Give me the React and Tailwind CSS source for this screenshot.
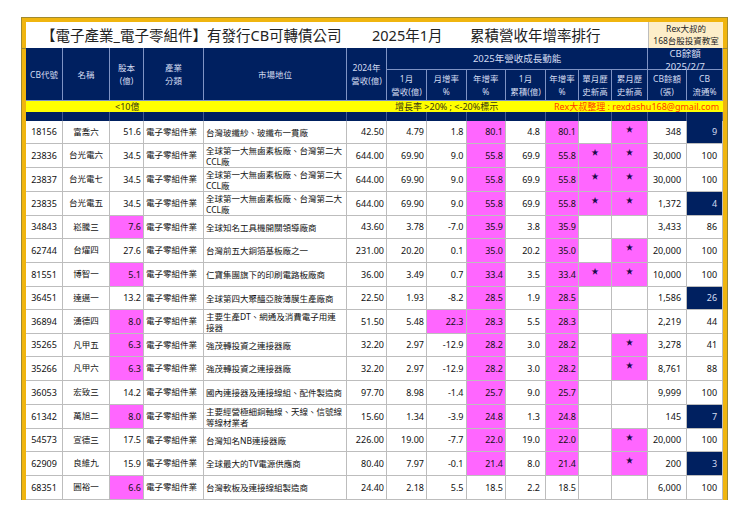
const rows = [
  ['18156', '富喬六', '51.6', '台灣玻纖紗、玻纖布一貫廠', '42.50', '4.79', '1.8', '80.1', '4.8', '80.1', false, true, '348', '9'],
  ['23836', '台光電六', '34.5', '全球第一大無鹵素板廠、台灣第二大CCL廠', '644.00', '69.90', '9.0', '55.8', '69.9', '55.8', true, true, '30,000', '100'],
  ['23837', '台光電七', '34.5', '全球第一大無鹵素板廠、台灣第二大CCL廠', '644.00', '69.90', '9.0', '55.8', '69.9', '55.8', true, true, '30,000', '100'],
  ['23835', '台光電五', '34.5', '全球第一大無鹵素板廠、台灣第二大CCL廠', '644.00', '69.90', '9.0', '55.8', '69.9', '55.8', true, true, '1,372', '4'],
  ['34843', '崧騰三', '7.6', '全球知名工具機開關領導廠商', '43.60', '3.78', '-7.0', '35.9', '3.8', '35.9', false, false, '3,433', '86'],
  ['62744', '台燿四', '27.6', '台灣前五大銅箔基板廠之一', '231.00', '20.20', '0.1', '35.0', '20.2', '35.0', false, true, '20,000', '100'],
  ['81551', '博智一', '5.1', '仁寶集團旗下的印刷電路板廠商', '36.00', '3.49', '0.7', '33.4', '3.5', '33.4', true, true, '10,000', '100'],
  ['36451', '達邁一', '13.2', '全球第四大聚醯亞胺薄膜生產廠商', '22.50', '1.93', '-8.2', '28.5', '1.9', '28.5', false, false, '1,586', '26'],
  ['36894', '湧德四', '8.0', '主要生產DT、網通及消費電子用連接器', '51.50', '5.48', '22.3', '28.3', '5.5', '28.3', false, false, '2,219', '44'],
  ['35265', '凡甲五', '6.3', '強茂轉投資之連接器廠', '32.20', '2.97', '-12.9', '28.2', '3.0', '28.2', false, true, '3,278', '41'],
  ['35266', '凡甲六', '6.3', '強茂轉投資之連接器廠', '32.20', '2.97', '-12.9', '28.2', '3.0', '28.2', false, true, '8,761', '88'],
  ['36053', '宏致三', '14.2', '國內連接器及連接線組、配件製造商', '97.70', '8.98', '-1.4', '25.7', '9.0', '25.7', false, false, '9,999', '100'],
  ['61342', '萬旭二', '8.0', '主要經營極細銅軸線、天線、信號線等線材業者', '15.60', '1.34', '-3.9', '24.8', '1.3', '24.8', false, false, '145', '7'],
  ['54573', '宣德三', '17.5', '台灣知名NB連接器廠', '226.00', '19.00', '-7.7', '22.0', '19.0', '22.0', false, true, '20,000', '100'],
  ['62909', '良維九', '15.9', '全球最大的TV電源供應商', '80.40', '7.97', '-0.1', '21.4', '8.0', '21.4', false, true, '200', '3'],
  ['68351', '圓裕一', '6.6', '台灣軟板及連接線組製造商', '24.40', '2.18', '5.5', '18.5', '2.2', '18.5', false, false, '6,000', '100'],
];

const shortRows = [0, 4, 7, 9, 13];

const th = 'bg-[#002060] text-[#d5ddf2] font-normal text-[8.5px] leading-[13px] p-0 text-center border-r border-b border-[#7f93c4]';
const td = 'p-0 text-[#111] border-r border-b border-[#bdbdbd]';
const num = 'text-[9px] text-right pr-[2px]';
const pink = 'bg-[#ff66ff] border-[#b85cb8]';
const navySpacer = 'bg-[#002060] p-0 border-r border-[#40598f]';

function Star({ on }) {
  return (
    <td className={`${td} text-center text-[7.5px] leading-none ${on ? pink : ''}`}>
      {on && <span className="block pb-[5px] text-[#1a0a4a]">★</span>}
    </td>
  );
}

function Row({ r, short }) {
  const lowCap = parseFloat(r[2]) < 10;
  const hotMonth = parseFloat(r[6]) > 20;
  const hotYear = parseFloat(r[7]) > 20;
  const lowFloat = parseInt(r[13]) < 30;
  return (
    <tr className={short ? 'h-[23px]' : 'h-[24px]'}>
      <td className={`${td} text-[9px] text-center`}>{r[0]}</td>
      <td className={`${td} text-[8.5px] text-center`}>{r[1]}</td>
      <td className={`${td} ${num} ${lowCap ? pink : ''}`}>{r[2]}</td>
      <td className={`${td} text-[8.5px] pl-[2px] whitespace-nowrap`}>電子零組件業</td>
      <td className={`${td} text-[8.5px] leading-[11px] pl-[2px] pr-[3px]`}>{r[3]}</td>
      <td className={`${td} ${num}`}>{r[4]}</td>
      <td className={`${td} ${num}`}>{r[5]}</td>
      <td className={`${td} ${num} ${hotMonth ? pink : ''}`}>{r[6]}</td>
      <td className={`${td} ${num} ${hotYear ? pink : ''}`}>{r[7]}</td>
      <td className={`${td} text-[9px] text-right pr-[5px]`}>{r[8]}</td>
      <td className={`${td} ${num} ${hotYear ? pink : ''}`}>{r[9]}</td>
      <Star on={r[10]} />
      <Star on={r[11]} />
      <td className={`${td} text-[9px] text-right pr-[5px]`}>{r[12]}</td>
      <td className={`${td} text-[9px] text-right pr-[5px] ${lowFloat ? 'bg-[#002060] text-[#d5ddf2]' : ''}`}>{r[13]}</td>
    </tr>
  );
}

export default function App() {
  return (
    <div className="h-[523px] w-[740px] overflow-hidden bg-white pt-[17px] pl-[21px] font-['Noto_Sans','Noto_Sans_CJK_TC',sans-serif]">
      <div className="relative w-[707px] border-x border-t border-[#a08a30]">
        {/* darker tick across the gold frame where the header starts */}
        <span className="absolute left-0 top-[30px] h-px w-[4px] bg-[#a08a30]" />
        <span className="absolute right-0 top-[30px] h-px w-[4px] bg-[#a08a30]" />
        <div className="border-x-4 border-t-4 border-[#f0b50f]">
          <table className="w-[697px] table-fixed border-separate border-spacing-0">
            <colgroup>
              <col className="w-[37px]" />
              <col className="w-[47px]" />
              <col className="w-[34px]" />
              <col className="w-[60px]" />
              <col className="w-[143px]" />
              <col className="w-[40px]" />
              <col className="w-[40px]" />
              <col className="w-[39.5px]" />
              <col className="w-[39.5px]" />
              <col className="w-[40px]" />
              <col className="w-[33px]" />
              <col className="w-[33px]" />
              <col className="w-[36px]" />
              <col className="w-[39px]" />
              <col className="w-[36px]" />
            </colgroup>
            <thead>
              <tr className="h-[26px]">
                <td colSpan={13} className="p-0 bg-white text-[#222] text-[14.5px] leading-none whitespace-nowrap">
                  <div className="flex items-center pl-[15px]">
                    <span className="w-[166px]">【電子產業_電子零組件】</span>
                    <span className="w-[165px]">有發行CB可轉債公司</span>
                    <span className="w-[98px]">2025年1月</span>
                    <span>累積營收年增率排行</span>
                  </div>
                </td>
                <td colSpan={2} className="p-0 bg-[#fdeec9] text-[#222] text-[8.5px] leading-[12px] text-center border-l border-[#bdbdbd]">
                  Rex大叔的<br />168台股投資教室
                </td>
              </tr>
              <tr className="h-[22px]">
                <th rowSpan={2} className={th}>CB代號</th>
                <th rowSpan={2} className={th}>名稱</th>
                <th rowSpan={2} className={th}>股本<br />(億)</th>
                <th rowSpan={2} className={th}>產業<br />分類</th>
                <th rowSpan={2} className={th}>市場地位</th>
                <th rowSpan={2} className={th}>2024年<br />營收(億)</th>
                <th colSpan={7} className={`${th} text-[9.5px]`}>2025年營收成長動能</th>
                <th colSpan={2} className={th}>
                  <div className="flex h-[21px] translate-y-[1px] flex-col justify-center text-[9.5px]">
                    <span>CB餘額</span>
                    <span>2025/2/7</span>
                  </div>
                </th>
              </tr>
              <tr className="h-[31px]">
                <th className={th}>1月<br />營收(億)</th>
                <th className={th}>月增率<br />%</th>
                <th className={th}>年增率<br />%</th>
                <th className={th}>1月<br />累積(億)</th>
                <th className={th}>年增率<br />%</th>
                <th className={th}>單月歷<br />史新高</th>
                <th className={th}>累月歷<br />史新高</th>
                <th className={th}>CB餘額<br />(張)</th>
                <th className={th}>CB<br />流通%</th>
              </tr>
              <tr className="h-[11px] bg-[#ffff00] text-[9px] leading-none whitespace-nowrap">
                <td colSpan={2} className="p-0" />
                <td colSpan={2} className="p-0 text-[#3a3a10] pl-[5px]">&lt;10億</td>
                <td colSpan={2} className="p-0" />
                <td colSpan={4} className="p-0 text-[#3a3a10] pl-[8px]">增長率 &gt;20% ; &lt;-20%標示</td>
                <td colSpan={5} className="p-0 text-[#ff3b00] pl-[8px]">Rex大叔整理 : rexdashu168@gmail.com</td>
              </tr>
              <tr className="h-[9px]">
                {Array.from({ length: 15 }).map((_, i) => (
                  <td key={i} className={navySpacer} />
                ))}
              </tr>
            </thead>
            <tbody>
              {rows.map((r, i) => (
                <Row key={r[0]} r={r} short={shortRows.includes(i)} />
              ))}
            </tbody>
          </table>
        </div>
      </div>
    </div>
  );
}
